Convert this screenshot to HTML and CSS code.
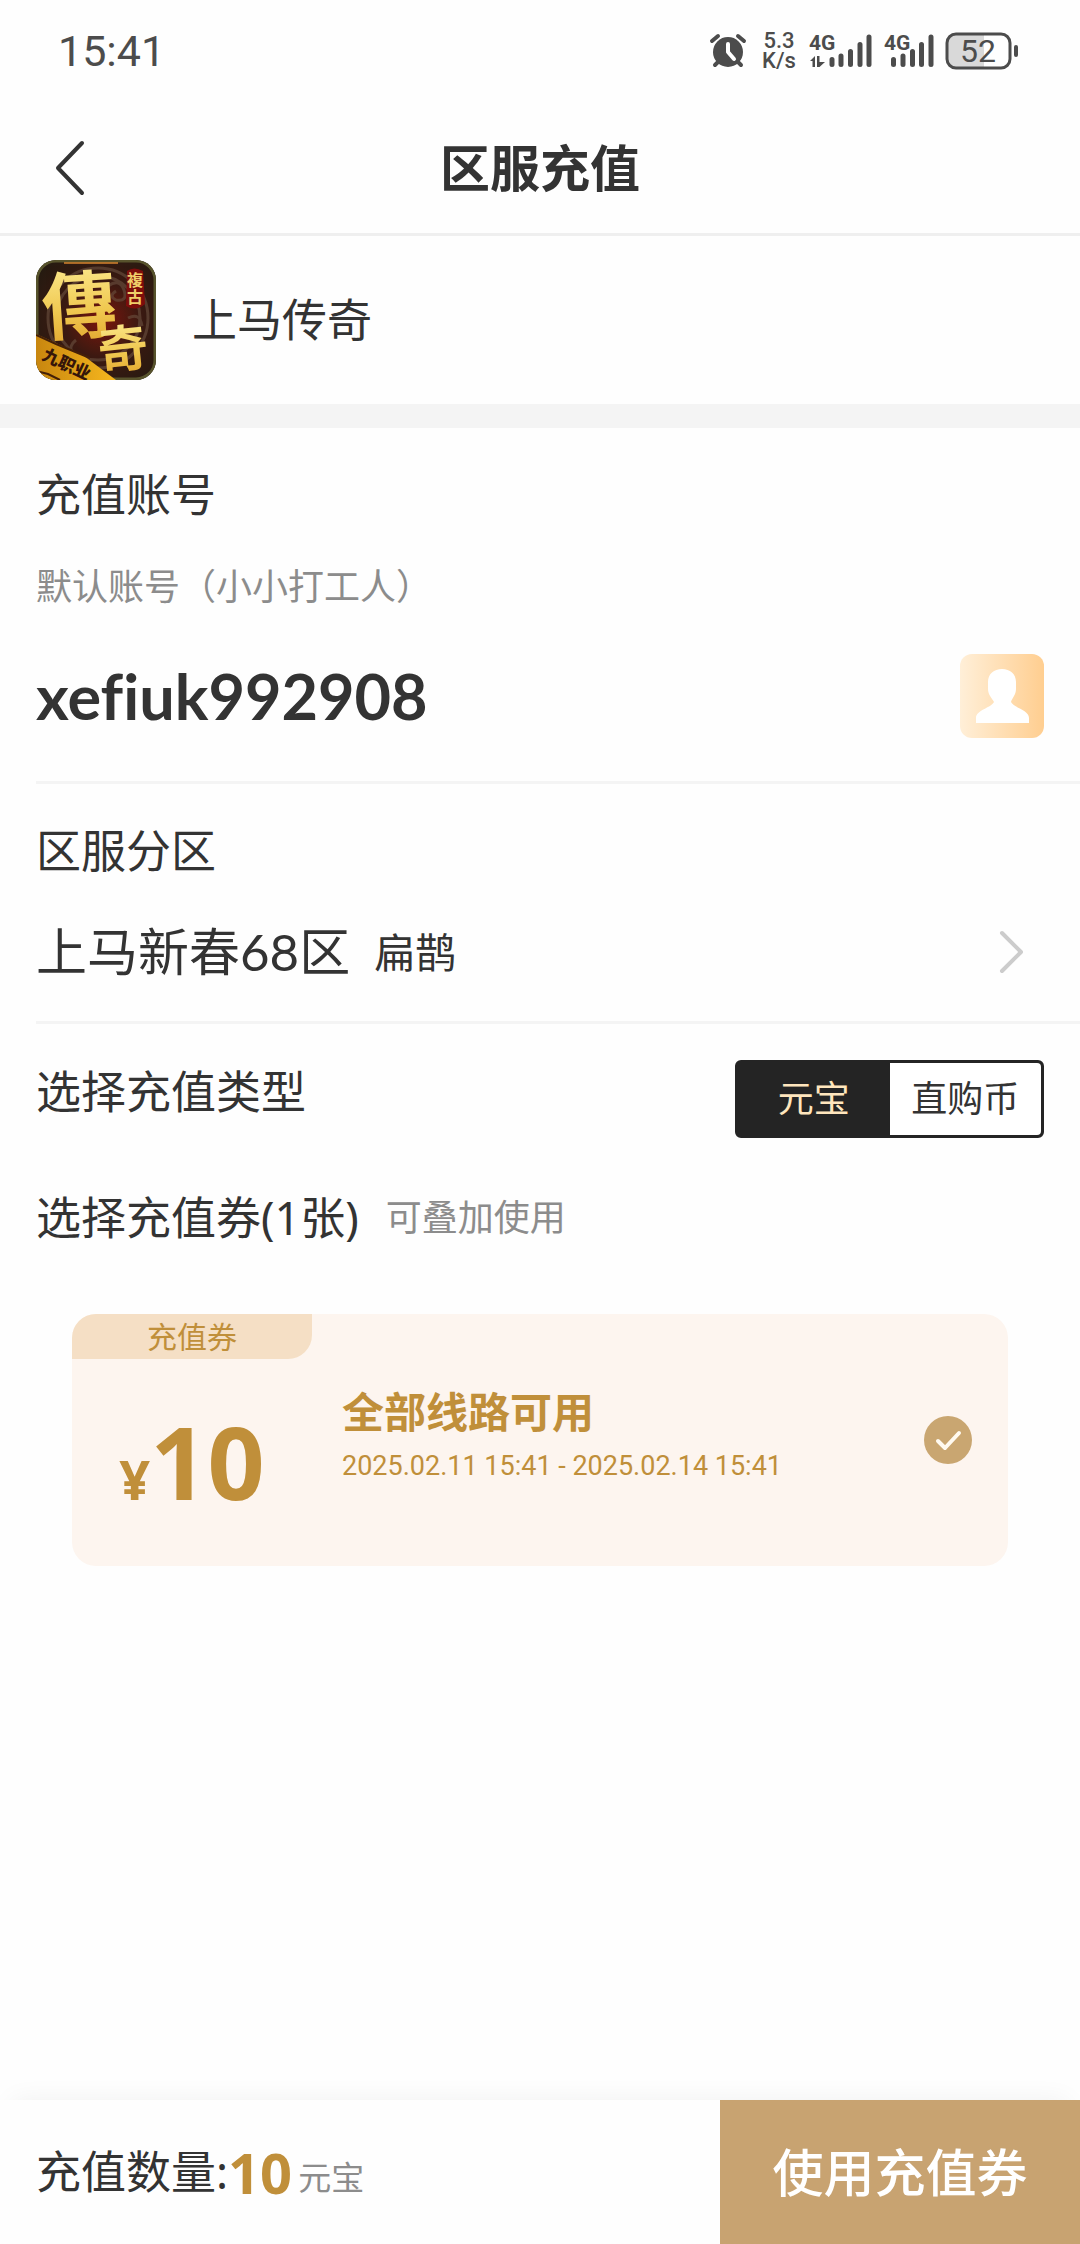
FILE: index.html
```html
<!DOCTYPE html>
<html lang="zh-CN">
<head>
<meta charset="utf-8">
<meta name="viewport" content="width=device-width, initial-scale=1">
<title>区服充值</title>
<link rel="stylesheet" href="styles.css">
</head>
<body>
<div class="page">
  <div class="status">
    <span class="status-time">15:41</span>
    <div class="status-icons">
      <svg class="alarm" width="36" height="36" viewBox="0 0 36 36" aria-hidden="true">
        <circle cx="18" cy="19" r="15" fill="#4c4c4c"/>
        <path d="M2 8 8 3M34 8 28 3M8 29 5 32M28 29 31 32" stroke="#4c4c4c" stroke-width="4" stroke-linecap="round"/>
        <path d="M18 11V19L24 26" fill="none" stroke="#fff" stroke-width="4" stroke-linecap="round" stroke-linejoin="round"/>
      </svg>
      <span class="speed"><span>5.3</span><span>K/s</span></span>
      <svg class="signal" width="64" height="36" viewBox="0 0 64 36" aria-hidden="true">
        <text x="0" y="17" class="net">4G</text>
        <path d="M23 26.500V31.500M32 23V31.500M41.500 18.500V31.500M51 11.500V31.500M60 4V31.500" stroke="#4c4c4c" stroke-width="5" stroke-linecap="round"/>
        <path d="M1 28 6 23V34H3.500V28ZM8 23H10.500V29H16L10.500 34H8Z" fill="#4c4c4c"/>
      </svg>
      <svg class="signal" width="50" height="36" viewBox="0 0 50 36" aria-hidden="true">
        <text x="0" y="17" class="net">4G</text>
        <path d="M9.500 26.500V31.500M19 23V31.500M28.500 18.500V31.500M37.500 11.500V31.500M47 4V31.500" stroke="#4c4c4c" stroke-width="5" stroke-linecap="round"/>
      </svg>
      <svg class="battery" width="74" height="38" viewBox="0 0 74 38" aria-hidden="true">
        <path d="M11 2H39V36H11Q2 36 2 27V11Q2 2 11 2Z" fill="#d9d9d9"/>
        <rect x="2" y="2" width="63" height="34" rx="9" fill="none" stroke="#4c4c4c" stroke-width="3"/>
        <rect x="69" y="13" width="4" height="12" rx="2" fill="#4c4c4c"/>
        <text x="33" y="30" text-anchor="middle" class="level">52</text>
      </svg>
    </div>
  </div>

  <header class="nav">
    <button class="back" aria-label="返回">
      <svg width="32" height="56" viewBox="0 0 32 56"><path d="M28 3 4 28 28 53" fill="none" stroke="#333" stroke-width="4" stroke-linecap="round" stroke-linejoin="round"/></svg>
    </button>
    <h1 class="nav-title">区服充值</h1>
  </header>

  <section class="game">
    <svg class="game-icon" width="120" height="120" viewBox="0 0 120 120" role="img" aria-label="上马传奇">
      <defs>
        <clipPath id="round"><rect width="120" height="120" rx="20"/></clipPath>
        <radialGradient id="bg" cx=".55" cy=".5" r=".7">
          <stop offset="0" stop-color="#7c160c"/><stop offset=".45" stop-color="#3c1a12"/><stop offset="1" stop-color="#221a10"/>
        </radialGradient>
        <linearGradient id="gold" x1="0" y1="0" x2="0" y2="1">
          <stop offset="0" stop-color="#fff3a0"/><stop offset=".6" stop-color="#f0c850"/><stop offset="1" stop-color="#e0a028"/>
        </linearGradient>
        <linearGradient id="band" x1="0" y1="0" x2="1" y2="0">
          <stop offset="0" stop-color="#c8860f"/><stop offset="1" stop-color="#f7b81e"/>
        </linearGradient>
      </defs>
      <g clip-path="url(#round)">
        <rect width="120" height="120" fill="url(#bg)"/>
        <g fill="none" stroke="#6b5140" stroke-width="3" opacity=".6">
          <circle cx="62" cy="58" r="50"/><circle cx="62" cy="58" r="42"/>
          <path d="M72 26q12-8 16 4t-8 10q-8-4 0-9M92 58q12-6 14 8M40 80q-8 6-4 14"/>
        </g>
        <rect x="1" y="1" width="118" height="118" rx="19" fill="none" stroke="#57532c" stroke-width="3"/>
        <path d="M28 3H82" stroke="#e08a30" stroke-width="2" opacity=".7"/>
        <path d="M91 11Q98 6 107 11L109 44Q100 52 90 46Z" fill="#7d0d0b"/>
        <text x="91" y="26" class="logo-small">複</text>
        <text x="91" y="43" class="logo-small">古</text>
        <text x="6" y="73" class="logo-big" transform="rotate(-4 40 46)">傳</text>
        <path d="M0 74 20 83 48 96 80 120H0Z" fill="url(#band)"/>
        <path d="M0 75 20 84 54 98M0 111 12 114 24 120" fill="none" stroke="#442008" stroke-width="2"/>
        <text x="62" y="107" class="logo-mid" transform="rotate(-6 86 90)">奇</text>
        <text x="5" y="99" class="logo-band" transform="rotate(25 5 99)">九职业</text>
      </g>
    </svg>
    <span class="game-name">上马传奇</span>
  </section>

  <main class="form">
    <section class="block account">
      <h2 class="label">充值账号</h2>
      <p class="hint">默认账号（小小打工人）</p>
      <div class="account-row">
        <span class="account-id">xefiuk992908</span>
        <button class="pick" aria-label="选择账号">
          <svg width="84" height="84" viewBox="0 0 84 84"><path d="M42 15C50 15 56 20 56 28V35C56 41 52 44 51 48C54 54 69 56 69 64V69H16V64C16 56 31 54 34 48C32 44 28 41 28 35V28C28 20 34 15 42 15Z" fill="#fff"/></svg>
        </button>
      </div>
    </section>

    <section class="block zone">
      <h2 class="label">区服分区</h2>
      <button class="zone-row">
        <span class="zone-name">上马新春68区</span>
        <span class="zone-role">扁鹊</span>
        <svg class="chevron" width="28" height="46" viewBox="0 0 28 46" aria-hidden="true"><path d="M4 4 23 23 4 42" fill="none" stroke="#ccc" stroke-width="4" stroke-linecap="round" stroke-linejoin="round"/></svg>
      </button>
    </section>

    <section class="type">
      <h2 class="label" id="type-label">选择充值类型</h2>
      <div class="segments" role="radiogroup" aria-labelledby="type-label">
        <label class="segment"><input type="radio" name="type" checked><span>元宝</span></label>
        <label class="segment"><input type="radio" name="type"><span>直购币</span></label>
      </div>
    </section>

    <section class="coupons">
      <div class="coupons-head">
        <h2 class="label">选择充值券(1张)</h2>
        <span class="hint">可叠加使用</span>
      </div>
      <label class="coupon">
        <span class="coupon-left">
          <span class="tag">充值券</span>
          <span class="amount"><span class="yen">¥</span>10</span>
        </span>
        <span class="coupon-info">
          <span class="coupon-title">全部线路可用</span>
          <span class="coupon-date">2025.02.11 15:41 - 2025.02.14 15:41</span>
        </span>
        <span class="check">
          <input type="checkbox" checked>
          <svg width="48" height="48" viewBox="0 0 48 48" aria-hidden="true"><path d="M14 25 21 32 35 17" fill="none" stroke="#fffaf0" stroke-width="4" stroke-linecap="round" stroke-linejoin="round"/></svg>
        </span>
      </label>
    </section>
  </main>

  <footer class="bar">
    <div class="total">充值数量:<strong class="total-num">10</strong><span class="total-unit">元宝</span></div>
    <button class="submit">使用充值券</button>
  </footer>
</div>
</body>
</html>
```
FILE: styles.css
```css
* { box-sizing: border-box; }
body {
  margin: 0;
  background: #fefefe;
  color: #333;
  font-family: "Noto Sans", "Noto Sans CJK SC", sans-serif;
}
h1, h2, p { margin: 0; font-weight: 400; }
button {
  margin: 0;
  padding: 0;
  border: 0;
  background: none;
  color: inherit;
  font: inherit;
}
svg { display: block; flex: none; overflow: visible; }

.page {
  display: flex;
  flex-direction: column;
  min-height: 100vh;
}

.status {
  display: flex;
  align-items: center;
  justify-content: space-between;
  height: 102px;
  padding: 0 61px 0 58px;
  color: #4c4c4c;
  font-family: Roboto, sans-serif;
}
.status-time { font-size: 43px; }
.status-icons { display: flex; align-items: center; }
.speed {
  display: grid;
  width: 34px;
  margin: 0 13px 0 16px;
  font-size: 22px;
  font-weight: 500;
  line-height: 20px;
  text-align: center;
}
.signal { margin-right: 11px; }
.net { font: 700 21px "Roboto", sans-serif; fill: #4c4c4c; }
.level { font: 400 32px "Roboto", sans-serif; fill: #4c4c4c; }

.nav {
  display: grid;
  grid-template-columns: 1fr auto 1fr;
  align-items: center;
  height: 134px;
  padding: 0 54px;
  border-bottom: 3px solid #efefef;
}
.back { justify-self: start; }
.nav-title { font-size: 50px; font-weight: 700; line-height: 72px; }

.game {
  display: flex;
  align-items: center;
  gap: 36px;
  padding: 24px 36px;
  border-bottom: 24px solid #f4f4f4;
}
.game-name { font-size: 45px; line-height: 64px; }
.logo-big, .logo-mid, .logo-small, .logo-band { font-family: "Noto Sans CJK TC", sans-serif; font-weight: 700; }
.logo-big { font-size: 74px; fill: url(#gold); }
.logo-mid { font-size: 50px; fill: url(#gold); }
.logo-small { font-size: 16px; fill: #f0cf6a; }
.logo-band { font-size: 17px; font-weight: 900; fill: #35160a; }

.form { flex: 1; padding-left: 36px; }
.block { border-bottom: 3px solid #f4f4f4; padding-right: 36px; }
.label { font-size: 45px; line-height: 64px; }
.hint { color: #8c8c8c; font-size: 36px; line-height: 52px; }

.account { padding-top: 35px; padding-bottom: 43px; }
.account .hint { margin: 34px 0 41px; }
.account-row { display: flex; align-items: center; justify-content: space-between; }
.account-id {
  font-family: Lato, "Noto Sans CJK SC", sans-serif;
  font-size: 63px;
  font-weight: 700;
  font-variant-ligatures: none;
  line-height: 84px;
}
.pick { border-radius: 12px; background: linear-gradient(90deg, #ffefd8, #ffce90); }

.zone { padding-top: 35px; padding-bottom: 33px; }
.zone-row {
  display: flex;
  align-items: center;
  width: 100%;
  margin-top: 33px;
  padding-right: 18px;
  line-height: 72px;
}
.zone-name { font-family: Lato, "Noto Sans CJK SC", sans-serif; font-size: 51px; }
.zone-role { margin-left: 24px; font-size: 41px; }
.chevron { margin-left: auto; }

.type {
  display: flex;
  align-items: flex-start;
  justify-content: space-between;
  padding: 36px 36px 0 0;
}
.segments {
  display: grid;
  grid-template-columns: 1fr 1fr;
  width: 309px;
  border: 3px solid #242424;
  border-radius: 6px;
  background: #242424;
}
.segment input { position: absolute; opacity: 0; }
.segment span {
  display: block;
  background: #fff;
  font-size: 36px;
  line-height: 72px;
  text-align: center;
}
.segment:last-child span { border-radius: 0 4px 4px 0; }
.segment input:checked + span { background: #242424; color: #ffe6bd; }

.coupons { padding: 48px 72px 0 0; }
.coupons-head { display: flex; align-items: center; gap: 27px; }
.coupon {
  display: flex;
  margin: 64px 0 0 36px;
  height: 252px;
  overflow: hidden;
  border-radius: 24px;
  background: #fdf5ef;
  color: #c08f3a;
}
.coupon-left { display: flex; flex-direction: column; width: 270px; }
.tag {
  width: 240px;
  border-radius: 0 0 24px 0;
  background: #f5dfc5;
  font-size: 30px;
  line-height: 45px;
  text-align: center;
}
.amount {
  width: 240px;
  padding-top: 32px;
  font-size: 100px;
  font-weight: 700;
  line-height: 140px;
  text-align: center;
}
.yen { font-size: 54px; }
.coupon-info {
  display: flex;
  flex: 1;
  flex-direction: column;
  justify-content: center;
  padding-bottom: 8px;
}
.coupon-title { font-size: 42px; font-weight: 700; line-height: 60px; }
.coupon-date { font-family: Roboto, sans-serif; font-size: 27px; line-height: 48px; }
.check {
  align-self: center;
  display: grid;
  margin-right: 36px;
}
.check > * { grid-area: 1 / 1; }
.check input {
  width: 48px;
  height: 48px;
  margin: 0;
  appearance: none;
  border-radius: 50%;
  background: #c9a671;
}

.bar {
  display: grid;
  grid-template-columns: 2fr 1fr;
  min-height: 144px;
  background: #fefefe;
  box-shadow: 0 -12px 24px -12px rgba(0, 0, 0, .06);
}
.total {
  display: flex;
  align-items: center;
  align-self: center;
  padding-left: 36px;
  font-size: 45px;
  line-height: 64px;
}
.total-num { color: #c08f3a; font-size: 56px; }
.total-unit {
  align-self: flex-end;
  margin-left: 6px;
  color: #8c8c8c;
  font-size: 33px;
  line-height: 52px;
}
.submit {
  background: #c8a371;
  color: #fff;
  font-size: 51px;
  font-weight: 500;
  line-height: 72px;
}
```
